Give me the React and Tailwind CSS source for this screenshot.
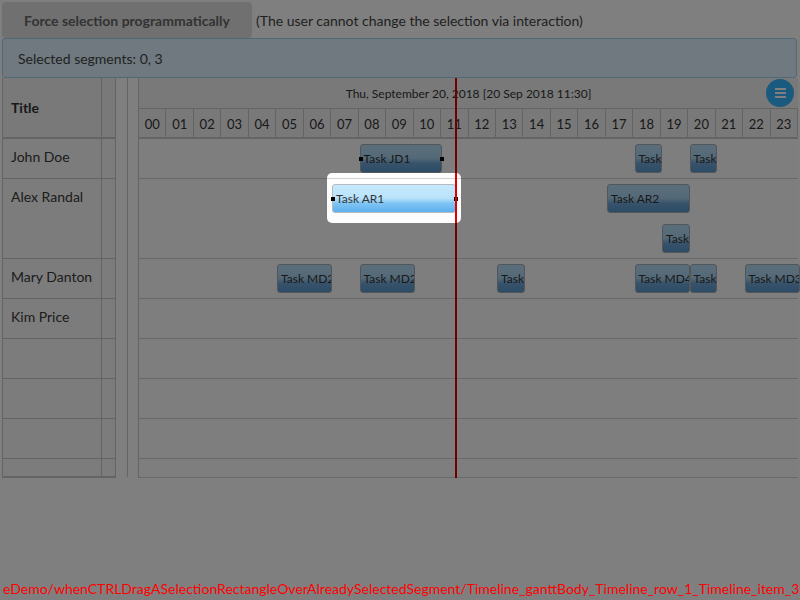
import React from "react";

const HW = 27.5;
const hours = Array.from({ length: 24 }, (_, i) => String(i).padStart(2, "0"));

const rows = [
  { name: "John Doe", h: 40, lanes: [[
    { s: 8, d: 3, t: "Task JD1", sel: true },
    { s: 18, d: 1, t: "Task" },
    { s: 20, d: 1, t: "Task" },
  ]] },
  { name: "Alex Randal", h: 80, lanes: [[
    { s: 7, d: 4.5, t: "Task AR1", sel: true },
    { s: 17, d: 3, t: "Task AR2" },
  ], [
    { s: 19, d: 1, t: "Task" },
  ]] },
  { name: "Mary Danton", h: 40, lanes: [[
    { s: 5, d: 2, t: "Task MD2" },
    { s: 8, d: 2, t: "Task MD2" },
    { s: 13, d: 1, t: "Task" },
    { s: 18, d: 2, t: "Task MD4" },
    { s: 20, d: 1, t: "Task" },
    { s: 22, d: 2, t: "Task MD3" },
  ]] },
  { name: "Kim Price", h: 40, lanes: [] },
  { name: "", h: 40, lanes: [] },
  { name: "", h: 40, lanes: [] },
  { name: "", h: 40, lanes: [] },
  { name: "", h: 19, lanes: [] },
];

function Bar({ b, lane }) {
  return (
    <div
      className={
        "absolute h-[29px] rounded-[3px] border flex items-center " +
        (b.t === "Task AR1"
          ? "border-[#b4bcc2] bg-[linear-gradient(to_bottom,#c6e9fd_0%,#b9e3fb_48%,#7fc4f5_68%,#5eb0ef_100%)]"
          : "border-[#a6acb2] bg-[linear-gradient(to_bottom,#b6dcf6_0%,#a9d3f0_48%,#6fa6d6_68%,#5a98ce_100%)]")
      }
      style={{ left: b.s * HW + 0.5, width: b.d * HW, top: lane * 40 + 5 }}
    >
      <div className="overflow-hidden whitespace-nowrap pl-[3px] text-[12px] leading-none text-[#333]">
        {b.t}
      </div>
      {b.sel && (
        <>
          <div className="absolute left-[-2px] top-[12px] w-[4px] h-[4px] bg-black" />
          <div className="absolute right-[-3px] top-[12px] w-[4px] h-[4px] bg-black" />
        </>
      )}
    </div>
  );
}

export default function App() {
  return (
    <div className="relative w-[800px] h-[600px] overflow-hidden bg-white font-[Lato] text-[14px] text-[#333]">
      <div className="pl-[2px] pt-[2px]">
        {/* top row */}
        <div className="flex items-center h-[36px]">
          <div className="h-[36px] w-[250px] rounded-[4px] bg-[#e0e1e2] flex items-center justify-center font-bold text-[14px] text-[#666]">
            Force selection programmatically
          </div>
          <div className="pl-[4px] text-[14px] text-[#444]">
            (The user cannot change the selection via interaction)
          </div>
        </div>
        {/* message */}
        <div className="h-[40px] w-[795px] rounded-[3px] border border-[#9ed3ea] bg-[#def3ff] flex items-center pl-[15px] text-[14px] text-[#444]">
          Selected segments: 0, 3
        </div>
        {/* gantt */}
        <div className="flex h-[400px]">
          {/* left table */}
          <div className="w-[114px] flex flex-col border-l border-[#c8c8c8]">
            <div className="flex h-[61px] border-b-2 border-[#c8c8c8] bg-[#f3f3f3]">
              <div className="w-[100px] border-r border-[#c8c8c8] flex items-center pl-[8px] font-bold text-[14px] text-[#333]">Title</div>
              <div className="w-[14px] border-r border-[#c8c8c8]" />
            </div>
            {rows.map((r, i) => (
              <div key={i} className="flex border-b border-[#c8c8c8] bg-[#f9f9f9] last:border-b-2" style={{ height: r.h }}>
                <div className="w-[100px] border-r border-[#c8c8c8] pl-[8px] pt-[9px] text-[14px] text-[#3a3a3a] leading-[18px]">{r.name}</div>
                <div className="w-[14px] border-r border-[#c8c8c8]" />
              </div>
            ))}
          </div>
          {/* splitter */}
          <div className="w-[22px] flex justify-center">
            <div className="w-px h-[399px] bg-[#c8c8c8]" />
          </div>
          {/* timeline */}
          <div className="relative w-[660px] border-l border-[#c8c8c8] flex flex-col">
            <div className="h-[30px] bg-[#f3f3f3] flex items-center justify-center text-[12px] text-[#333] pt-[1px]">
              Thu, September 20, 2018 [20 Sep 2018 11:30]
            </div>
            <div className="h-[31px] grid grid-cols-24 border-t border-b-2 border-[#c8c8c8] bg-[#f3f3f3]">
              {hours.map((h) => (
                <div key={h} className="border-r border-[#c8c8c8] flex items-center justify-center pt-[3px] text-[13px] text-[#333]">{h}</div>
              ))}
            </div>
            {rows.map((r, i) => (
              <div key={i} className="relative border-b border-[#d2d2d2] bg-[#fdfdfd] last:border-b-2 last:border-[#c8c8c8]" style={{ height: r.h }}>
                {r.lanes.map((lane, li) => lane.map((b, bi) => <Bar key={li + "-" + bi} b={b} lane={li} />))}
              </div>
            ))}
            {/* now line */}
            <div className="absolute top-0 left-[316px] w-[2px] h-[400px] bg-[#e00000]" />
            {/* menu button */}
            <div className="absolute top-[1px] right-[4px] w-[28px] h-[28px] rounded-full bg-[#36b4ff] flex flex-col items-center justify-center gap-[2px]">
              <div className="w-[11px] h-[2px] bg-white" />
              <div className="w-[11px] h-[2px] bg-white" />
              <div className="w-[11px] h-[2px] bg-white" />
            </div>
          </div>
        </div>
      </div>
      {/* spotlight */}
      <div className="absolute left-[327px] top-[173px] w-[134px] h-[50px] rounded-[5px] shadow-[0_0_0_1200px_rgba(0,0,0,0.5)]" />
      {/* debug path */}
      <div className="absolute z-10 left-[3px] bottom-[4px] whitespace-nowrap text-[14px] text-[#ff0000] leading-none">
        eDemo/whenCTRLDragASelectionRectangleOverAlreadySelectedSegment/Timeline_ganttBody_Timeline_row_1_Timeline_item_3
      </div>
    </div>
  );
}
